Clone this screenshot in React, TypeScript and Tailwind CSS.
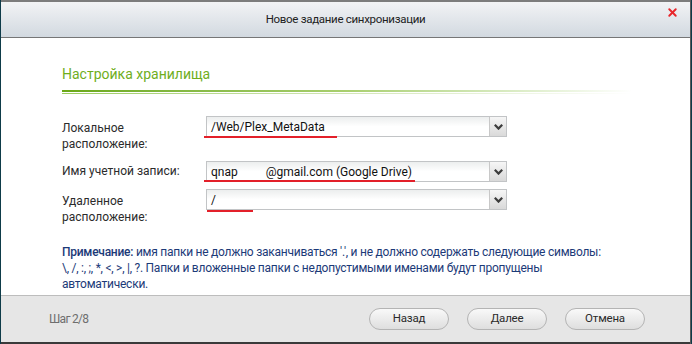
import { X } from 'lucide-react'

function Chevron() {
  return (
    <svg width="9" height="6" viewBox="0 0 9 6">
      <path d="M0.8 0.8 L4.5 4.6 L8.2 0.8" fill="none" stroke="#3c3c3c" strokeWidth="2.2" />
    </svg>
  )
}

interface SelectProps {
  children: React.ReactNode
  mark: string
}

function SelectBox({ children, mark }: SelectProps) {
  return (
    <div className="relative flex h-[21px] w-[301px] border border-[#c2c4c6] bg-gradient-to-b from-[#eceeee] via-white to-white">
      <div className="flex flex-1 items-center pl-[4px] text-[12px] leading-none text-[#111]">{children}</div>
      <div className="flex w-[17px] items-center justify-center border-l border-[#c8c8c8] bg-gradient-to-b from-[#f6f6f6] to-[#d9d9d9]">
        <Chevron />
      </div>
      <div className={mark} />
    </div>
  )
}

export default function App() {
  return (
    <div className="h-[344px] w-[692px] overflow-hidden bg-[#0e3b49] font-['Roboto',sans-serif]">
      <div className="ml-px flex h-[344px] w-[690px] flex-col border-r border-[#5a5a5a]">
        <div className="relative flex h-[38px] items-center justify-center border-t-2 border-b border-t-[#7c7c7c] border-b-[#767676] bg-gradient-to-b from-[#f2f3f5] to-[#d2d9e0]">
          <span className="text-[11.5px] tracking-[-0.3px] text-[#222]">Новое задание синхронизации</span>
          <X className="absolute right-[11px] top-[4px] h-[13px] w-[13px] text-[#e8262b]" strokeWidth={3.5} />
        </div>

        <div className="flex flex-1 flex-col bg-white pl-[61px]">
          <div className="mt-[28px] text-[14px] leading-[16px] text-[#6fae1d]">Настройка хранилища</div>
          <div className="mt-[8px] h-[2px] w-[570px] bg-gradient-to-r from-[#6aa815] via-[#a9cf6e] to-white" />
          <div className="mt-px h-px w-[570px] bg-gradient-to-r from-[#9ccb5e] via-[#d3e6b6] to-white" />

          <div className="mt-[22px] flex h-[45px] items-start">
            <div className="w-[144px] pt-[4px] text-[12px] leading-[16px] text-[#2b2b2b]">
              Локальное
              <br />
              расположение:
            </div>
            <SelectBox mark="absolute left-[-3px] top-[19px] h-[2px] w-[133px] bg-[#e3202a]">/Web/Plex_MetaData</SelectBox>
          </div>

          <div className="flex h-[28px] items-start">
            <div className="w-[144px] text-[12px] leading-[21px] text-[#2b2b2b]">Имя учетной записи:</div>
            <SelectBox mark="absolute left-[-3px] top-[18px] h-[2px] w-[211px] bg-[#e3202a]">
              qnap
              <span className="inline-block w-[28px]" />
              @gmail.com (Google Drive)
            </SelectBox>
          </div>

          <div className="flex items-start">
            <div className="w-[144px] pt-[4px] text-[12px] leading-[16px] text-[#2b2b2b]">
              Удаленное
              <br />
              расположение:
            </div>
            <SelectBox mark="absolute left-0 top-[20px] h-[2px] w-[46px] bg-[#e3202a]">/</SelectBox>
          </div>

          <p className="mt-[19px] whitespace-nowrap text-[12px] leading-[16px] tracking-[-0.25px] text-[#1c3a78]">
            <span className="font-medium">Примечание:</span> имя папки не должно заканчиваться '.', и не должно
            содержать следующие символы:
            <br />
            \, /, :, ;, *, &lt;, &gt;, |, ?. Папки и вложенные папки с недопустимыми именами будут пропущены
            <br />
            автоматически.
          </p>
        </div>

        <div className="flex h-[49px] items-center border-t border-b-2 border-t-[#bdbdbd] border-b-[#3a3a3a] bg-[#e6e6e6] pl-[48px] pr-[45px]">
          <span className="flex-1 text-[12px] tracking-[-0.7px] text-[#6e6e6e]">Шаг 2/8</span>
          <div className="flex gap-[18px]">
            {['Назад', 'Далее', 'Отмена'].map((t) => (
              <button
                key={t}
                className="h-[22px] w-[80px] rounded-full border border-[#b4b4b4] bg-gradient-to-b from-[#f9f9f9] to-[#dedede] text-[11.5px] tracking-[-0.2px] text-[#2a2a2a]"
              >
                {t}
              </button>
            ))}
          </div>
        </div>
      </div>
    </div>
  )
}
